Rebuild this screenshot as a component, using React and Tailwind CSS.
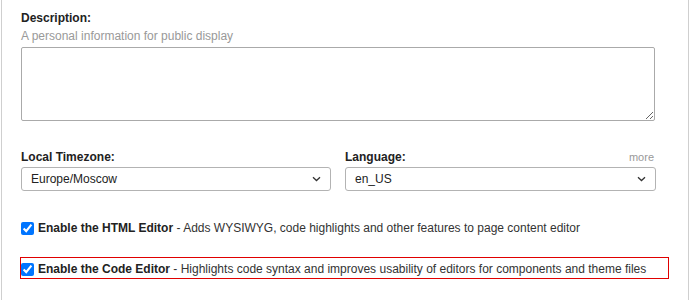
import React from "react";

function Chevron() {
  return (
    <svg width="9" height="6" viewBox="0 0 9 6" className="shrink-0">
      <path d="M1 1.2 L4.5 4.5 L8 1.2" fill="none" stroke="#333" strokeWidth="1.3" />
    </svg>
  );
}

function Select({ value }) {
  return (
    <div className="flex h-[24px] items-center justify-between rounded-[3px] border border-[#b3b3b3] bg-white pl-[9px] pr-[9px] text-[12px] text-[#222]">
      <span>{value}</span>
      <Chevron />
    </div>
  );
}

function Check({ bold, rest, outlined }) {
  return (
    <label
      className={
        "flex h-[20px] w-[647px] items-center gap-[4px] whitespace-nowrap pt-[3px] text-[12px] leading-[15px] text-[#333] " +
        (outlined ? "outline outline-1 outline-[#e00000]" : "")
      }
    >
      <input type="checkbox" defaultChecked className="m-0 h-[13px] w-[13px] shrink-0 accent-[#0075ff]" />
      <span>
        <b className="font-bold text-[#222]">{bold}</b> - {rest}
      </span>
    </label>
  );
}

export default function App() {
  return (
    <div
      className="h-[300px] w-[690px] bg-white"
      style={{ fontFamily: '"Liberation Sans", Arial, sans-serif' }}
    >
      <div className="ml-[1px] mr-[1px] h-full border-l border-r border-[#cfcfcf] pl-[19px] pt-[10px]">
        <div className="w-[635px]">
          <div className="text-[12px] font-bold leading-[16px] text-[#222]">Description:</div>
          <div className="mt-[2px] text-[12px] leading-[16px] text-[#999]">
            A personal information for public display
          </div>
          <textarea className="mt-[3px] block h-[74px] w-[634px] rounded-[2px] border border-[#aaa] bg-white" />

          <div className="mt-[28px] grid grid-cols-[310px_311px] gap-x-[14px]">
            <div>
              <div className="text-[12px] font-bold leading-[16px] text-[#222]">Local Timezone:</div>
              <div className="mt-[2px]">
                <Select value="Europe/Moscow" />
              </div>
            </div>
            <div>
              <div className="flex items-center justify-between text-[12px] leading-[16px]">
                <span className="font-bold text-[#222]">Language:</span>
                <span className="pr-[2px] text-[11px] text-[#999]">more</span>
              </div>
              <div className="mt-[2px]">
                <Select value="en_US" />
              </div>
            </div>
          </div>

          <div className="mt-[26px] flex flex-col gap-[21px]">
            <Check
              bold="Enable the HTML Editor"
              rest="Adds WYSIWYG, code highlights and other features to page content editor"
            />
            <Check
              outlined
              bold="Enable the Code Editor"
              rest="Highlights code syntax and improves usability of editors for components and theme files"
            />
          </div>
        </div>
      </div>
    </div>
  );
}
